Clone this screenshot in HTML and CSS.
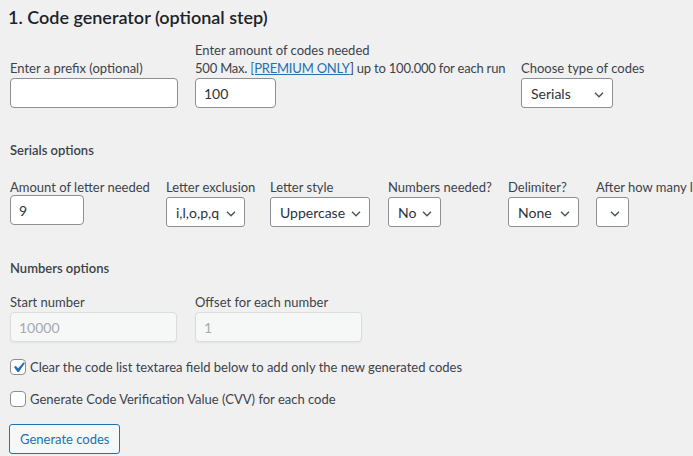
FILE: index.html
```html
<!DOCTYPE html>
<html>
<head>
<meta charset="utf-8">
<link rel="stylesheet" href="styles.css">
</head>
<body>
<div class="page">
  <h2 class="title">1. Code generator (optional step)</h2>

  <div class="row row-main">
    <div class="field w-185">
      <label class="lbl">Enter a prefix (optional)</label>
      <input class="text w-168" type="text" value="">
    </div>
    <div class="field w-326">
      <label class="lbl">Enter amount of codes needed</label>
      <label class="lbl tight">500 Max. <a href="#" class="link">[PREMIUM ONLY</a>] up to 100.000 for each run</label>
      <input class="text w-81" type="text" value="100">
    </div>
    <div class="field">
      <label class="lbl">Choose type of codes</label>
      <select class="sel w-92"><option>Serials</option></select>
    </div>
  </div>

  <h3 class="sub sub-serials">Serials options</h3>

  <div class="row row-serials">
    <div class="field w-156">
      <label class="lbl">Amount of letter needed</label>
      <input class="text w-74 raise" type="text" value="9">
    </div>
    <div class="field w-104">
      <label class="lbl">Letter exclusion</label>
      <select class="sel w-79"><option>i,l,o,p,q</option></select>
    </div>
    <div class="field w-118">
      <label class="lbl">Letter style</label>
      <select class="sel w-100"><option>Uppercase</option></select>
    </div>
    <div class="field w-120">
      <label class="lbl">Numbers needed?</label>
      <select class="sel w-53"><option>No</option></select>
    </div>
    <div class="field w-88">
      <label class="lbl">Delimiter?</label>
      <select class="sel w-71"><option>None</option></select>
    </div>
    <div class="field">
      <label class="lbl">After how many letters?</label>
      <select class="sel w-33"><option></option></select>
    </div>
  </div>

  <h3 class="sub sub-numbers">Numbers options</h3>

  <div class="row row-numbers">
    <div class="field w-185">
      <label class="lbl">Start number</label>
      <input class="text w-167" type="text" value="10000" disabled>
    </div>
    <div class="field">
      <label class="lbl">Offset for each number</label>
      <input class="text w-167" type="text" value="1" disabled>
    </div>
  </div>

  <label class="check check-first"><input type="checkbox" class="box" checked>Clear the code list textarea field below to add only the new generated codes</label>
  <label class="check check-second"><input type="checkbox" class="box">Generate Code Verification Value (CVV) for each code</label>

  <button class="btn" type="button">Generate codes</button>
</div>
</body>
</html>
```

FILE: styles.css
```css
html, body {
  margin: 0;
  padding: 0;
  background: #f0f0f1;
  overflow: hidden;
}

body {
  font-family: "Lato", "Open Sans", sans-serif;
  font-size: 13px;
  color: #3c434a;
  width: 693px;
  height: 456px;
}

.page {
  padding: 6px 0 0 10px;
}

.title {
  margin: 0 0 0 -2px;
  font-size: 18px;
  line-height: 22px;
  font-weight: 600;
  color: #1d2327;
}

.row {
  display: flex;
  flex-wrap: nowrap;
  align-items: flex-end;
}

.row-main { margin-top: 13px; }
.row-serials { margin-top: 19px; }
.row-numbers { margin-top: 16px; }

.field {
  display: flex;
  flex-direction: column;
  align-items: flex-start;
  flex-shrink: 0;
}

.lbl {
  display: block;
  line-height: 18px;
  white-space: nowrap;
}

.tight { letter-spacing: -0.2px; }

.lbl + input, .lbl + select { margin-top: 1px; }

.link {
  color: #2271b1;
  text-decoration: underline;
}

.sub {
  margin: 0;
  font-size: 13px;
  line-height: 18px;
  font-weight: 600;
  color: #3c434a;
}

.sub-serials { margin-top: 33px; }
.sub-numbers { margin-top: 32px; }

.text, .sel {
  box-sizing: border-box;
  height: 30px;
  margin: 0;
  font-family: inherit;
  font-size: 14px;
  color: #2c3338;
  background-color: #fff;
  border: 1px solid #8c8f94;
  border-radius: 4px;
  padding: 0 8px;
  outline: none;
}

.text.raise { margin-top: -1px; margin-bottom: 2px; }

.text:disabled {
  background: #f6f7f7;
  border-color: #dcdcde;
  color: #a7aaad;
  box-shadow: 0 1px 2px rgba(0,0,0,0.05);
}

.sel {
  -webkit-appearance: none;
  appearance: none;
  border-radius: 3px;
  padding: 0 22px 0 9px;
  background-image: url("data:image/svg+xml;utf8,<svg xmlns='http://www.w3.org/2000/svg' width='10' height='6' viewBox='0 0 10 6'><path d='M1 0.8 L5 4.8 L9 0.8' fill='none' stroke='%2350575e' stroke-width='1.5'/></svg>");
  background-repeat: no-repeat;
  background-position: right 8px top 13px;
  background-size: 10px 6px;
}

.w-33 { width: 33px; }
.w-53 { width: 53px; }
.w-71 { width: 71px; }
.w-74 { width: 74px; }
.w-79 { width: 79px; }
.w-81 { width: 81px; }
.w-88 { width: 88px; }
.w-92 { width: 92px; }
.w-100 { width: 100px; }
.w-104 { width: 104px; }
.w-118 { width: 118px; }
.w-120 { width: 120px; }
.w-156 { width: 156px; }
.w-167 { width: 167px; }
.w-168 { width: 168px; }
.w-185 { width: 185px; }
.w-326 { width: 326px; }

.check {
  display: flex;
  align-items: center;
  height: 20px;
  line-height: 20px;
  white-space: nowrap;
}

.check-first { margin-top: 15px; }
.check-second { margin-top: 12px; }

.box {
  -webkit-appearance: none;
  appearance: none;
  box-sizing: border-box;
  width: 16px;
  height: 16px;
  margin: 0 4px 0 0;
  border: 1px solid #8c8f94;
  border-radius: 4px;
  background: #fff;
  flex-shrink: 0;
}

.box:checked {
  background-image: url("data:image/svg+xml;utf8,<svg xmlns='http://www.w3.org/2000/svg' viewBox='0 0 20 20'><path d='M14.83 4.89l1.34.94-5.81 8.38H9.02L5.78 9.67l1.34-1.25 2.57 2.4z' fill='%232271b1'/></svg>");
  background-size: 21px 21px;
  background-position: -3px -3px;
  background-repeat: no-repeat;
}

.btn {
  display: block;
  box-sizing: border-box;
  margin: 15px 0 0 -1px;
  height: 30px;
  padding: 0 10px;
  font-family: inherit;
  font-size: 13px;
  color: #2271b1;
  background: #f6f7f7;
  border: 1px solid #2271b1;
  border-radius: 3px;
}
```
